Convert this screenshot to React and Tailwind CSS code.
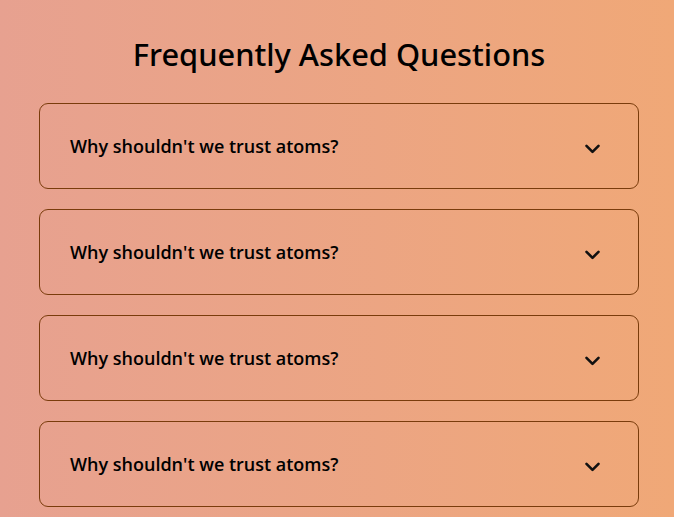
import React from 'react';

const questions = [
    "Why shouldn't we trust atoms?",
    "Why shouldn't we trust atoms?",
    "Why shouldn't we trust atoms?",
    "Why shouldn't we trust atoms?",
];

const Chevron = () => (
    <svg width="15" height="10" viewBox="0 0 15 10" fill="none" className="mt-[6px]">
        <path d="M1.5 1.8 L7.5 7.8 L13.5 1.8" stroke="#111" strokeWidth="2.6" strokeLinecap="round" strokeLinejoin="round" />
    </svg>
);

const App = () => {
    return (
        <div
            className="min-h-screen bg-gradient-to-r from-[#e7a190] to-[#f0a877] pl-[39px] pr-[35px] pt-[30px] text-black"
            style={{ fontFamily: '"Open Sans", "Noto Sans", sans-serif' }}
        >
            <h1
                className="text-center text-[30.8px] font-medium leading-[48px] mb-[25px]"
                style={{ fontFamily: '"Noto Sans", "Open Sans", sans-serif' }}
            >
                Frequently Asked Questions
            </h1>
            <div className="flex flex-col gap-[20px]">
                {questions.map((q, i) => (
                    <div
                        key={i}
                        className="h-[86px] border border-[#7a3c0c] rounded-[9px] flex items-center justify-between pl-[30px] pr-[38px]"
                    >
                        <span className="text-[18px] font-semibold">{q}</span>
                        <Chevron />
                    </div>
                ))}
            </div>
        </div>
    );
};

export default App;
